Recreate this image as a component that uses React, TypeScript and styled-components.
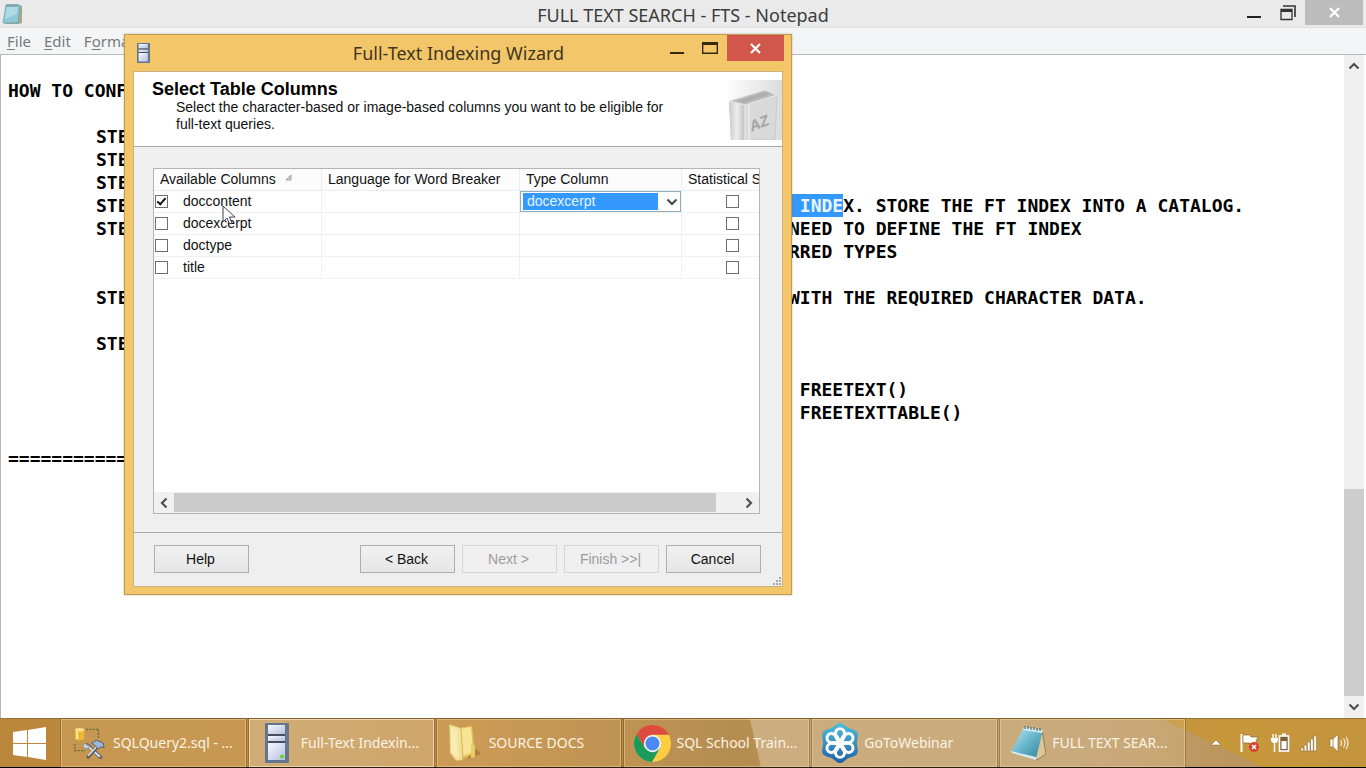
import React from "react";
import styled, { createGlobalStyle, css } from "styled-components";

const ui = `"Noto Sans", "Open Sans", sans-serif`;
const dialogFont = `"Liberation Sans", Arial, sans-serif`;

const Global = createGlobalStyle`
  *, *::before, *::after { box-sizing: border-box; }
  body { margin: 0; background: #fff; }
  button, input, select { font: inherit; margin: 0; padding: 0; }
`;

const Desktop = styled.div`
  position: relative;
  display: flex;
  flex-direction: column;
  min-height: 100vh;
  overflow: hidden;
`;

/* ---------- Notepad ---------- */

const Notepad = styled.main`
  flex: 1;
  display: flex;
  flex-direction: column;
`;

const NotepadTitleBar = styled.header`
  display: grid;
  grid-template-columns: 1fr auto 1fr;
  height: 28px;
  background: #eaeaea;
  border-bottom: 1px solid #e2e2e2;
`;

const NotepadIconSlot = styled.div`
  padding: 3px 0 0 2px;
`;

const NotepadTitle = styled.h1`
  margin: 0;
  font: 400 18px/30px ${ui};
  color: #3c3c3c;
`;

const WindowControls = styled.div`
  display: flex;
  justify-content: flex-end;
  align-items: flex-start;
`;

const ControlButton = styled.button<{ $w: number; $h: number; $bg?: string }>`
  display: flex;
  align-items: center;
  justify-content: center;
  width: ${(p) => p.$w}px;
  height: ${(p) => p.$h}px;
  border: 0;
  background: ${(p) => p.$bg ?? "transparent"};
`;

const MenuBar = styled.nav`
  display: flex;
  gap: 13px;
  height: 27px;
  padding-left: 7px;
  background: #f4f5f7;
  border-bottom: 1px solid #b9babb;
`;

const MenuButton = styled.button`
  border: 0;
  background: none;
  font: 400 15px/27px ${ui};
  color: #777a7d;
  u { text-underline-offset: 2px; }
`;

const EditorRow = styled.div`
  flex: 1;
  display: flex;
  border-left: 1px solid #b5b5b5;
`;

const Editor = styled.div`
  flex: 1;
  min-width: 0;
  padding: 1px 0 0 7px;
  overflow: hidden;
  background: #fff;
  color: #000;
  font: 700 18px/23px "DejaVu Sans Mono", monospace;
`;

const Line = styled.div`
  display: flex;
  height: 23px;
  white-space: pre;
`;

const LineStart = styled.span<{ $indent?: boolean }>`
  flex: 0 0 781px;
  padding-left: ${(p) => (p.$indent ? 88 : 0)}px;
`;

const Selected = styled.span`
  display: inline-block;
  height: 23px;
  background: #3399ff;
  color: #e9f5ff;
`;

const VScroll = styled.div`
  display: flex;
  flex-direction: column;
  width: 20px;
  margin-right: 2px;
  background: #f0f0f0;
`;

const VTrack = styled.div`
  flex: 1;
  display: flex;
  flex-direction: column;
  justify-content: flex-end;
`;

const VThumb = styled.div`
  flex: 0 0 33.5%;
  background: #cdcdcd;
`;

const ScrollButton = styled.button`
  display: flex;
  align-items: center;
  justify-content: center;
  width: 20px;
  height: 22px;
  border: 0;
  background: transparent;
`;

/* ---------- Wizard ---------- */

const Wizard = styled.section`
  position: absolute;
  left: 124px;
  top: 34px;
  width: 668px;
  padding: 0 8px 7px;
  border: 1px solid #c49c50;
  background: #f3c669;
  box-shadow: 0 0 2px rgba(120, 90, 30, 0.4);
  font: 400 14px/17px ${dialogFont};
  color: #111;
`;

const WizardTitleBar = styled.header`
  display: grid;
  grid-template-columns: 100px 1fr 124px;
  height: 36px;
  margin-right: -1px;
`;

const WizardIconSlot = styled.div`
  padding: 8px 0 0 4px;
`;

const WizardTitle = styled.h2`
  margin: 0;
  padding-left: 24px;
  text-align: center;
  font: 400 18px/36px ${ui};
  color: #41361f;
`;

const WizardBody = styled.div`
  border: 1px solid #cdb27c;
  background: #efefef;
`;

const Banner = styled.div`
  display: flex;
  justify-content: space-between;
  height: 75px;
  padding: 8px 0 0 18px;
  background: #fff;
  border-bottom: 1px solid #a9a9a9;
`;

const BannerTitle = styled.h3`
  margin: 0;
  font: 700 18px/19px ${dialogFont};
  color: #000;
`;

const BannerText = styled.p`
  width: 510px;
  margin: 0 0 0 24px;
`;

const GridFrame = styled.div`
  display: flex;
  flex-direction: column;
  height: 346px;
  margin: 21px 22px 18px 19px;
  border: 1px solid #b4b4b4;
  background: #fff;
  overflow: hidden;
`;

const GridView = styled.div`
  flex: 1;
  overflow: hidden;
`;

const Table = styled.table`
  width: 629px;
  table-layout: fixed;
  border-collapse: separate;
  border-spacing: 0;
`;

const Th = styled.th<{ $w: number }>`
  width: ${(p) => p.$w}px;
  height: 22px;
  padding: 0 0 0 6px;
  border-right: 1px solid #e9edf2;
  border-bottom: 1px solid #e9edf2;
  background: #fcfcfd;
  text-align: left;
  font-weight: 400;
  white-space: nowrap;
  svg { margin-left: 9px; vertical-align: 3px; }
`;

const Td = styled.td<{ $center?: boolean }>`
  height: 22px;
  padding: 0;
  border-right: 1px solid #eff0f1;
  border-bottom: 1px solid #eff0f1;
  ${(p) => p.$center && css`
    input { display: block; margin: 0 auto; }
  `}
`;

const ColumnLabel = styled.label`
  display: flex;
  align-items: center;
  gap: 15px;
  padding-left: 1px;
`;

const Checkbox = styled.input.attrs({ type: "checkbox" })`
  appearance: none;
  position: relative;
  width: 13px;
  height: 13px;
  border: 1px solid #6e6e6e;
  background: #fff;
  &:checked::after {
    content: "";
    position: absolute;
    left: 3px;
    top: 0;
    width: 5px;
    height: 9px;
    border: solid #111;
    border-width: 0 2px 2px 0;
    transform: rotate(42deg);
  }
`;

const Combo = styled.div`
  position: relative;
  height: 21px;
  svg { position: absolute; right: 3px; top: 7px; pointer-events: none; }
`;

const ComboSelect = styled.select`
  appearance: none;
  display: block;
  width: 100%;
  height: 21px;
  padding-left: 6px;
  border: 1px solid #8fafc0;
  border-radius: 0;
  color: #e6f3ff;
  background: linear-gradient(#3399ff, #3399ff) 2px 1px / calc(100% - 24px) 17px no-repeat #fff;
`;

const HScroll = styled.div`
  display: flex;
  align-items: center;
  height: 21px;
  background: #f0f0f0;
`;

const HTrack = styled.div`
  flex: 1;
`;

const HThumb = styled.div`
  width: 96%;
  height: 19px;
  background: #cbcbcb;
`;

const WizardFooter = styled.footer`
  position: relative;
  display: flex;
  gap: 7px;
  height: 54px;
  padding: 12px 21px 0 20px;
  border-top: 1px solid #a9a9a9;
`;

const WizardButton = styled.button<{ $first?: boolean }>`
  width: 95px;
  height: 28px;
  padding-right: 2px;
  border: 1px solid #aeaeae;
  background: linear-gradient(#f1f1f1, #e6e6e6);
  color: #111;
  ${(p) => p.$first && css`margin-right: auto;`}
  &:disabled {
    border-color: #d6d6d6;
    background: #efefef;
    color: #9c9c9c;
  }
`;

const Grip = styled.svg`
  position: absolute;
  right: 0;
  bottom: 0;
`;

const Pointer = styled.svg`
  position: absolute;
  left: 222px;
  top: 205px;
`;

/* ---------- Taskbar ---------- */

const Taskbar = styled.footer`
  position: relative;
  display: flex;
  height: 50px;
  border-top: 1px solid #96733a;
  border-bottom: 1px solid #000;
  background: linear-gradient(90deg, #bb873b, #c18c42 35%, #a87d3d 54%, #b5883f 75%, #c7983b 90%, #c3943c);
  &::before {
    content: "";
    position: absolute;
    inset: 0;
    background: linear-gradient(90deg, #c8a97c, #bf9f70 80%, #b78d4c);
    clip-path: polygon(54.9% 0, 85% 0, 92.5% 100%, 55.7% 100%);
  }
`;

const StartButton = styled.button`
  position: relative;
  flex: 0 0 61px;
  border: 0;
  background: none;
  display: flex;
  align-items: center;
  padding-left: 13px;
`;

const TaskList = styled.div`
  position: relative;
  flex: 0 1 1124px;
  display: flex;
  gap: 3px;
`;

const TaskButton = styled.button<{ $active?: boolean }>`
  flex: 1 1 0;
  min-width: 0;
  display: flex;
  align-items: center;
  gap: 5px;
  padding: 0 8px;
  border: 1px solid ${(p) => (p.$active ? "#ecd5ae" : "rgba(238, 214, 172, 0.5)")};
  outline: 1px solid rgba(110, 75, 25, 0.4);
  outline-offset: 0;
  background: ${(p) =>
    p.$active
      ? "linear-gradient(90deg, rgba(235,225,205,.4), rgba(240,225,200,.3))"
      : "rgba(255, 230, 185, 0.16)"};
  color: #fbf3e4;
  font: 400 14px/20px ${ui};
`;

const IconSlot = styled.span`
  flex: 0 0 38px;
  display: flex;
  justify-content: center;
`;

const TaskText = styled.span`
  white-space: nowrap;
`;

const Tray = styled.div`
  position: relative;
  flex: 1;
  display: flex;
  justify-content: flex-end;
  align-items: center;
  gap: 10px;
  padding-right: 16px;
`;

const TrayButton = styled.button`
  display: flex;
  border: 0;
  background: none;
`;

/* ---------- Drawings ---------- */

const Chevron = ({ dir }: { dir: "up" | "down" | "left" | "right" }) => {
  const turn = { up: 0, right: 90, down: 180, left: 270 }[dir];
  return (
    <svg width="12" height="12" viewBox="0 0 12 12">
      <path d="M1.500 8.500 6 4l4.500 4.500" transform={`rotate(${turn} 6 6)`} fill="none" stroke="#505050" strokeWidth="2.2" />
    </svg>
  );
};

const NotepadIcon = ({ size }: { size: number }) => (
  <svg width={size} height={size} viewBox="0 0 36 36">
    <defs>
      <linearGradient id="pad" x1="0" y1="0" x2="1" y2="1">
        <stop offset="0" stopColor="#c4eaf2" />
        <stop offset=".5" stopColor="#69b6cb" />
        <stop offset="1" stopColor="#2e7f9d" />
      </linearGradient>
    </defs>
    <path d="M32 5 36 29 27 35 24 32Z" fill="#d9c69a" stroke="#7c6c48" strokeWidth=".8" />
    <path d="M14 2 33 5 26 33 1 26Z" fill="url(#pad)" />
    <path d="M14 2 33 5 32 8 13 5Z" fill="#d3edf3" />
    <path d="M15 1v3m3-3v3m3-2v3m3-3v3m3-2v3m3-3v3" stroke="#5b6a6f" strokeWidth="1.2" />
    <path d="M1 26 26 32 26 35 2 28Z" fill="#d5eaf0" />
  </svg>
);

const SmallPadIcon = () => (
  <svg width="21" height="22" viewBox="0 0 21 22">
    <path d="M5 3h15v17l-3 1H3Z" fill="#a9a68c" />
    <path d="M4 2h14l-2 18H1Z" fill="#8cc8d5" stroke="#5e9daa" strokeWidth=".7" />
    <path d="M5 3h11l-1 8L3 16Z" fill="#b9e2e9" opacity=".7" />
    <path d="M5 1v3m2-3v3m2-3v3m2-3v3m2-3v3m2-3v3" stroke="#6c8a90" />
  </svg>
);

const ServerIcon = ({ w, h, light }: { w: number; h: number; light?: boolean }) => (
  <svg width={w} height={h} viewBox="0 0 24 40" preserveAspectRatio="none">
    <defs>
      <linearGradient id="srv" x1="0" y1="0" x2="1" y2="1">
        <stop offset="0" stopColor="#f7faff" />
        <stop offset="1" stopColor="#b3bfdc" />
      </linearGradient>
    </defs>
    <rect x="0" y="0" width="24" height="40" rx="1" fill="#66758e" />
    <rect x="3" y="2" width="17" height="9" fill="url(#srv)" />
    <rect x="3" y="13" width="17" height="5" fill="url(#srv)" />
    <rect x="3" y="20" width="17" height="17" fill="url(#srv)" />
    <path d="M3 12h17M3 19h17" stroke="#3c4252" strokeWidth="1.4" />
    {light && <circle cx="17" cy="33.500" r="2" fill="#5fd61f" />}
  </svg>
);

const BookIcon = () => (
  <svg width="54" height="60" viewBox="0 0 54 60">
    <defs>
      <linearGradient id="bk" x1="0" x2="1">
        <stop offset="0" stopColor="#fdfdfd" />
        <stop offset="1" stopColor="#dcdcdc" />
      </linearGradient>
      <linearGradient id="bs" x1="0" x2="1">
        <stop offset="0" stopColor="#c9c9c9" />
        <stop offset=".5" stopColor="#eeeeee" />
        <stop offset="1" stopColor="#bdbdbd" />
      </linearGradient>
    </defs>
    <rect width="54" height="60" fill="url(#bk)" />
    <path d="M1 21 37 10 49 15 46 60H3Z" fill="#d4d4d4" />
    <path d="M1 21 17 25V60H3Z" fill="url(#bs)" />
    <path d="M17 25 49 15 47 60H17Z" fill="#d9d9d9" stroke="#c6c6c6" strokeWidth=".8" />
    <path d="M1 21 37 10 49 15 17 25Z" fill="#bdbdbd" stroke="#e9e9e9" strokeWidth="1" />
    <path d="M8 21 37 12 42 14 16 23Z" fill="#9f9f9f" opacity=".5" />
    <path d="M17 25V60M21 24V60" stroke="#f3f3f3" strokeWidth="1" />
    <text x="0" y="0" transform="translate(23 52) rotate(-22) skewX(-12)" fontFamily="Liberation Sans, sans-serif" fontWeight="700" fontSize="15" fill="#a2a2a2">AZ</text>
  </svg>
);

const WindowsLogo = () => (
  <svg width="33" height="33" viewBox="0 0 33 33" fill="#fff">
    <path d="M0 5 14 3V16H0ZM15 3 33 0V16H15ZM0 17H14V30L0 28ZM15 17H33V33L15 30Z" />
  </svg>
);

const SqlIcon = () => (
  <svg width="34" height="34" viewBox="0 0 36 36">
    <path d="M15 3.500h13v9M3 19v7h11" fill="none" stroke="#5d6b30" strokeWidth="1.400" strokeDasharray="2 1.400" />
    <path d="M3 4v9c0 3 10 3 10 0V4Z" fill="#eeb634" />
    <ellipse cx="8" cy="4" rx="5" ry="2" fill="#fbe08a" />
    <path d="M5.500 6v8" stroke="#fff2bd" strokeWidth="1.800" />
    <path d="M16 20 30 33" stroke="#5f6772" strokeWidth="4" strokeLinecap="round" />
    <path d="M15 20 29 32" stroke="#dfe5ee" strokeWidth="2" strokeLinecap="round" />
    <path d="M29 20 17 33" stroke="#5f5f62" strokeWidth="3.400" strokeLinecap="round" />
    <path d="M27 21 17 31.500" stroke="#e8e9ec" strokeWidth="1.400" />
    <path d="M21 18 26 15 33 18 34 23 31 22 28 24Z" fill="#9db6dc" stroke="#42516b" strokeWidth=".9" />
    <path d="M13 23c-3-2 0-5 2-4l1 2 2-1c1 3-2 5-5 3Z" fill="#cdd4df" stroke="#6e7684" strokeWidth=".6" />
  </svg>
);

const FolderIcon = () => (
  <svg width="36" height="40" viewBox="0 0 36 40">
    <path d="M20 36 29 26 34 31Z" fill="#8a642b" opacity=".45" />
    <path d="M10 5 25 3 28 30 16 36Z" fill="#dfc25d" />
    <path d="M11 6 24 4 26 29 16 33Z" fill="#f6e394" />
    <path d="M24 22h4v12l-4 1Z" fill="#e7cd62" />
    <path d="M2 1 14 5 16 37 9 38 3 30Z" fill="#f3e19a" stroke="#c9a94e" strokeWidth=".8" />
    <path d="M4 4 10 7 11 35 4 29Z" fill="#fbf1c4" opacity=".6" />
  </svg>
);

const ChromeIcon = () => (
  <svg width="37" height="37" viewBox="0 0 36 36">
    <circle cx="18" cy="18" r="18" fill="#ffcd41" />
    <path d="M18 9.500H33.900A18 18 0 0 0 2.400 9L10.500 22Z" fill="#dc4b3e" />
    <path d="M2.400 9A18 18 0 0 0 17.500 36L25.400 22.200 18 26.500 10.600 22.200Z" fill="#1b9a5b" />
    <circle cx="18" cy="18" r="8.400" fill="#f4f4f4" />
    <circle cx="18" cy="18" r="6.800" fill="#4a8af4" />
  </svg>
);

const GoToIcon = () => (
  <svg width="38" height="40" viewBox="0 0 38 40">
    <defs>
      <linearGradient id="gt" x1="0" y1="0" x2="0" y2="1">
        <stop offset="0" stopColor="#52c0d8" />
        <stop offset="1" stopColor="#2160a8" />
      </linearGradient>
    </defs>
    <path d="M19 0c3 0 4 2 7 4s8 2 10 5 0 7 0 11 2 8 0 11-7 3-10 5-4 4-7 4-4-2-7-4-8-2-10-5 0-7 0-11-2-8 0-11 7-3 10-5 4-4 7-4Z" fill="url(#gt)" />
    <g fill="none" stroke="#fff" strokeWidth="2.900" strokeLinejoin="round">
      {[0, 60, 120, 180, 240, 300].map((a) => (
        <path key={a} d="M19 19 16 13.500a4.500 4.500 0 1 1 6 0Z" transform={`rotate(${a} 19 20)`} />
      ))}
    </g>
  </svg>
);

const FlagIcon = () => (
  <svg width="20" height="22" viewBox="0 0 20 22">
    <path d="M1.500 2v18" stroke="#fff" strokeWidth="2" />
    <path d="M3 3h7l1 2h7l-2 4 1 4h-6l-1-2H3Z" fill="#fff" stroke="#7d5f2d" strokeWidth=".6" />
    <circle cx="14" cy="15" r="5" fill="#d8402f" />
    <path d="m12 13 4 4m0-4-4 4" stroke="#fff" strokeWidth="1.500" />
  </svg>
);

const BatteryIcon = () => (
  <svg width="20" height="22" viewBox="0 0 20 22">
    <path d="M3 2v4M6 2v4" stroke="#fff" strokeWidth="1.400" />
    <path d="M1 6h7v3l-2 2H3L1 9Z" fill="#fff" />
    <path d="M4.500 11v9" stroke="#fff" strokeWidth="1.400" />
    <rect x="9.500" y="4" width="9" height="15" fill="#7d6237" stroke="#fff" strokeWidth="1.600" />
    <path d="M12 2.500h4" stroke="#fff" strokeWidth="2" />
    <rect x="11.500" y="9" width="5" height="8" fill="#fff" />
  </svg>
);

const SignalIcon = () => (
  <svg width="18" height="20" viewBox="0 0 18 20" fill="#fff" stroke="#80622f" strokeWidth=".5">
    <path d="M1 15h2.600v3H1ZM4.200 12h2.600v6H4.200ZM7.400 9H10v9H7.400ZM10.600 6h2.600v12h-2.600ZM13.800 3h2.600v15h-2.600Z" />
  </svg>
);

const VolumeIcon = () => (
  <svg width="22" height="20" viewBox="0 0 22 20">
    <path d="M2 6h3l5-5v18l-5-5H2Z" fill="#fff" stroke="#80622f" strokeWidth=".6" />
    <path d="M5 6v8" stroke="#9b7a40" strokeWidth=".8" />
    <path d="M12.500 7q2 3 0 6M15.500 5.500q3 4.500 0 9M18 4q4 6 0 12" fill="none" stroke="#f5e8cd" strokeWidth="1.300" />
  </svg>
);

const CloseGlyph = () => (
  <svg width="11" height="11" viewBox="0 0 11 11">
    <path d="m1 1 9 9m0-9-9 9" stroke="#fff" strokeWidth="2.200" />
  </svg>
);

/* ---------- Content ---------- */

type TextLine = { start?: string; indent?: boolean; selected?: string; rest?: string };

const step: TextLine = { start: "STE", indent: true };

const lines: TextLine[] = [
  {},
  { start: "HOW TO CONF" },
  {},
  step,
  step,
  step,
  { ...step, selected: " INDE", rest: "X. STORE THE FT INDEX INTO A CATALOG." },
  { ...step, rest: "NEED TO DEFINE THE FT INDEX" },
  { rest: "RRED TYPES" },
  {},
  { ...step, rest: "WITH THE REQUIRED CHARACTER DATA." },
  {},
  step,
  {},
  { rest: " FREETEXT()" },
  { rest: " FREETEXTTABLE()" },
  {},
  { start: "===========" },
];

const rows = [
  { name: "doccontent", checked: true },
  { name: "docexcerpt", checked: false },
  { name: "doctype", checked: false },
  { name: "title", checked: false },
];

const tasks = [
  { label: "SQLQuery2.sql - ...", icon: <SqlIcon /> },
  { label: "Full-Text Indexin...", icon: <ServerIcon w={24} h={40} light />, active: true },
  { label: "SOURCE DOCS", icon: <FolderIcon /> },
  { label: "SQL School Train...", icon: <ChromeIcon /> },
  { label: "GoToWebinar", icon: <GoToIcon /> },
  { label: "FULL TEXT SEAR...", icon: <NotepadIcon size={36} /> },
];

export default function App() {
  return (
    <>
      <Global />
      <Desktop>
        <Notepad>
          <NotepadTitleBar>
            <NotepadIconSlot><SmallPadIcon /></NotepadIconSlot>
            <NotepadTitle>FULL TEXT SEARCH - FTS - Notepad</NotepadTitle>
            <WindowControls>
              <ControlButton $w={34} $h={25} aria-label="Minimize">
                <svg width="14" height="12"><path d="M0 10h14" stroke="#222" strokeWidth="2" /></svg>
              </ControlButton>
              <ControlButton $w={34} $h={25} aria-label="Restore">
                <svg width="16" height="16" viewBox="0 0 16 16" fill="none" stroke="#333">
                  <path d="M3 1h12v11" strokeWidth="1.600" />
                  <path d="M1 4.500h11v10H1Z" strokeWidth="1.300" />
                  <path d="M1 5.500h11" strokeWidth="3" />
                </svg>
              </ControlButton>
              <ControlButton $w={58} $h={25} $bg="#bcbcbc" aria-label="Close"><CloseGlyph /></ControlButton>
              <ControlButton as="span" $w={3} $h={25} />
            </WindowControls>
          </NotepadTitleBar>
          <MenuBar>
            <MenuButton><u>F</u>ile</MenuButton>
            <MenuButton><u>E</u>dit</MenuButton>
            <MenuButton>F<u>o</u>rma</MenuButton>
          </MenuBar>
          <EditorRow>
            <Editor>
              {lines.map((line, i) => (
                <Line key={i}>
                  <LineStart $indent={line.indent}>{line.start}</LineStart>
                  {line.selected && <Selected>{line.selected}</Selected>}
                  {line.rest && <span>{line.rest}</span>}
                </Line>
              ))}
            </Editor>
            <VScroll>
              <ScrollButton aria-label="Scroll up"><Chevron dir="up" /></ScrollButton>
              <VTrack><VThumb /></VTrack>
              <ScrollButton aria-label="Scroll down"><Chevron dir="down" /></ScrollButton>
            </VScroll>
          </EditorRow>
        </Notepad>

        <Wizard aria-label="Full-Text Indexing Wizard">
          <WizardTitleBar>
            <WizardIconSlot><ServerIcon w={13} h={20} /></WizardIconSlot>
            <WizardTitle>Full-Text Indexing Wizard</WizardTitle>
            <WindowControls>
              <ControlButton $w={34} $h={26} aria-label="Minimize">
                <svg width="14" height="12"><path d="M0 11h14" stroke="#33290f" strokeWidth="2" /></svg>
              </ControlButton>
              <ControlButton $w={34} $h={26} aria-label="Maximize">
                <svg width="16" height="12" viewBox="0 0 16 12" fill="none" stroke="#33290f">
                  <path d="M.7.7h14.600v10.600H.7Z" strokeWidth="1.400" />
                  <path d="M0 1.500h16" strokeWidth="3" />
                </svg>
              </ControlButton>
              <ControlButton $w={58} $h={26} $bg="#d05749" aria-label="Close"><CloseGlyph /></ControlButton>
            </WindowControls>
          </WizardTitleBar>
          <WizardBody>
            <Banner>
              <div>
                <BannerTitle>Select Table Columns</BannerTitle>
                <BannerText>
                  Select the character-based or image-based columns you want to be eligible for full-text queries.
                </BannerText>
              </div>
              <BookIcon />
            </Banner>
            <GridFrame>
              <GridView>
                <Table>
                  <thead>
                    <tr>
                      <Th $w={168}>
                        Available Columns
                        <svg width="8" height="7" viewBox="0 0 8 7"><path d="M1 6 6 1v5Z" fill="#d5d5d5" stroke="#8d8d8d" strokeWidth=".8" /></svg>
                      </Th>
                      <Th $w={198}>Language for Word Breaker</Th>
                      <Th $w={162}>Type Column</Th>
                      <Th $w={101}>Statistical S</Th>
                    </tr>
                  </thead>
                  <tbody>
                    {rows.map((row) => (
                      <tr key={row.name}>
                        <Td>
                          <ColumnLabel>
                            <Checkbox defaultChecked={row.checked} />
                            {row.name}
                          </ColumnLabel>
                        </Td>
                        <Td />
                        <Td>
                          {row.checked && (
                            <Combo>
                              <ComboSelect aria-label="Type Column" defaultValue="docexcerpt">
                                <option>docexcerpt</option>
                              </ComboSelect>
                              <svg width="12" height="8" viewBox="0 0 12 8">
                                <path d="m1.500 1.500 4.500 4.500 4.500-4.500" fill="none" stroke="#444" strokeWidth="2" />
                              </svg>
                            </Combo>
                          )}
                        </Td>
                        <Td $center><Checkbox aria-label={`Statistical Semantics for ${row.name}`} /></Td>
                      </tr>
                    ))}
                  </tbody>
                </Table>
              </GridView>
              <HScroll>
                <ScrollButton aria-label="Scroll left"><Chevron dir="left" /></ScrollButton>
                <HTrack><HThumb /></HTrack>
                <ScrollButton aria-label="Scroll right"><Chevron dir="right" /></ScrollButton>
              </HScroll>
            </GridFrame>
            <WizardFooter>
              <WizardButton $first>Help</WizardButton>
              <WizardButton>&lt; Back</WizardButton>
              <WizardButton disabled>Next &gt;</WizardButton>
              <WizardButton disabled>Finish &gt;&gt;|</WizardButton>
              <WizardButton>Cancel</WizardButton>
              <Grip width="10" height="10" fill="#a8a8a8">
                <path d="M7 1h2v2H7ZM4 4h2v2H4ZM7 4h2v2H7ZM1 7h2v2H1ZM4 7h2v2H4ZM7 7h2v2H7Z" />
              </Grip>
            </WizardFooter>
          </WizardBody>
        </Wizard>

        <Pointer width="14" height="21" viewBox="0 0 14 21">
          <path d="M1 1v16l4-4 2.500 6 2.500-1-2.500-6H13Z" fill="#fff" fillOpacity=".85" stroke="#44444c" />
        </Pointer>

        <Taskbar>
          <StartButton aria-label="Start"><WindowsLogo /></StartButton>
          <TaskList>
            {tasks.map((task) => (
              <TaskButton key={task.label} $active={task.active}>
                <IconSlot>{task.icon}</IconSlot>
                <TaskText>{task.label}</TaskText>
              </TaskButton>
            ))}
          </TaskList>
          <Tray>
            <TrayButton aria-label="Show hidden icons">
              <svg width="19" height="8" viewBox="0 0 19 8"><path d="M0 6 5 1l5 5Z" fill="#fff" stroke="#80622f" strokeWidth=".5" /></svg>
            </TrayButton>
            <TrayButton aria-label="Action Center"><FlagIcon /></TrayButton>
            <TrayButton aria-label="Battery"><BatteryIcon /></TrayButton>
            <TrayButton aria-label="Network"><SignalIcon /></TrayButton>
            <TrayButton aria-label="Volume"><VolumeIcon /></TrayButton>
          </Tray>
        </Taskbar>
      </Desktop>
    </>
  );
}
